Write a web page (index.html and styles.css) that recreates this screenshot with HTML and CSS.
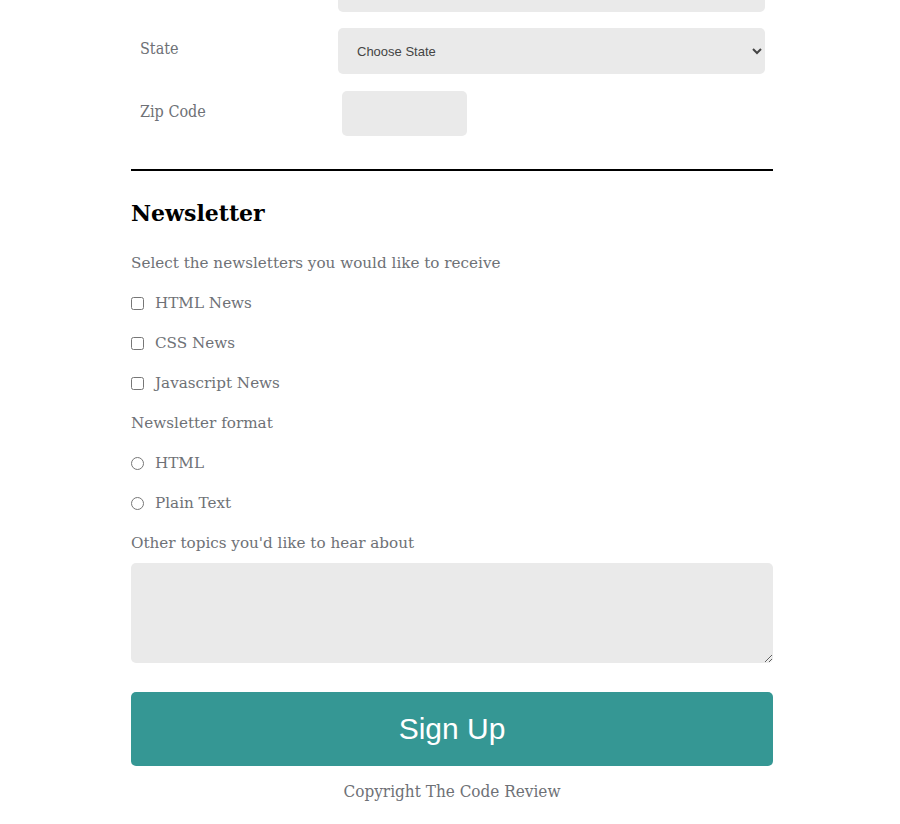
FILE: index.html
```html
<!DOCTYPE html>
<html>
<head>
<meta charset="utf-8">
<link rel="stylesheet" href="styles.css">
</head>
<body>
<form class="page">
  <div class="row row-cut">
    <span class="lbl"></span>
    <input class="field cut" type="text">
  </div>
  <div class="row row-state">
    <label class="lbl">State</label>
    <select class="field select">
      <option>Choose State</option>
    </select>
  </div>
  <div class="row row-zip">
    <label class="lbl">Zip Code</label>
    <input class="field zip" type="text">
  </div>
  <hr class="rule">
  <h2 class="title">Newsletter</h2>
  <p class="line">Select the newsletters you would like to receive</p>
  <label class="line opt"><input type="checkbox" class="box"><span>HTML News</span></label>
  <label class="line opt"><input type="checkbox" class="box"><span>CSS News</span></label>
  <label class="line opt"><input type="checkbox" class="box"><span>Javascript News</span></label>
  <p class="line">Newsletter format</p>
  <label class="line opt"><input type="radio" name="fmt" class="box"><span>HTML</span></label>
  <label class="line opt"><input type="radio" name="fmt" class="box"><span>Plain Text</span></label>
  <p class="line">Other topics you'd like to hear about</p>
  <textarea class="topics"></textarea>
  <button type="button" class="submit">Sign Up</button>
  <p class="copy">Copyright The Code Review</p>
</form>
</body>
</html>
```
FILE: styles.css
```css
html, body {
  margin: 0;
  padding: 0;
  background: #fff;
}
body {
  font-family: "DejaVu Serif", "Liberation Serif", serif;
  color: #6e7176;
  font-size: 15.2px;
}
.page {
  width: 642px;
  margin: 0 0 0 131px;
  display: flex;
  flex-direction: column;
}
.row {
  display: flex;
  align-items: center;
}
.lbl {
  width: 198px;
  padding-left: 9px;
  font-family: "DejaVu Serif Condensed", "DejaVu Serif", serif;
  font-size: 16px;
  flex: none;
}
.field {
  background: #eaeaea;
  border: none;
  border-radius: 5px;
  outline: none;
  box-sizing: border-box;
}
.row-cut {
  height: 12px;
  overflow: hidden;
  align-items: flex-end;
}
.cut {
  width: 427px;
  height: 40px;
  flex: none;
}
.row-state {
  margin-top: 16px;
  height: 46px;
}
.row-state .lbl {
  margin-top: -6px;
}
.select {
  width: 427px;
  height: 46px;
  font-family: "Liberation Sans", Arial, sans-serif;
  font-size: 13px;
  color: #444;
  padding: 0 15px;
}
.row-zip {
  margin-top: 17px;
  height: 45px;
}
.row-zip .lbl {
  margin-top: -5px;
}
.zip {
  width: 125px;
  height: 45px;
  margin-left: 4px;
}
.rule {
  margin: 33px 0 0 0;
  border: none;
  border-top: 2px solid #000;
  height: 0;
}
.title {
  margin: 26px 0 0 0;
  font-size: 22px;
  line-height: 32px;
  font-weight: bold;
  color: #000;
}
.line {
  margin: 0;
  height: 40px;
  line-height: 40px;
  display: flex;
  align-items: center;
}
.title + .line {
  margin-top: 14px;
}
.opt .box {
  margin: 0 11px 0 0;
  width: 13px;
  height: 13px;
}
.topics {
  margin-top: 0;
  height: 100px;
  width: 642px;
  box-sizing: border-box;
  background: #eaeaea;
  border: none;
  border-radius: 5px;
  resize: vertical;
}
.submit {
  margin-top: 29px;
  height: 74px;
  background: #359794;
  color: #fff;
  border: none;
  border-radius: 5px;
  font-family: "Liberation Sans", Arial, sans-serif;
  font-size: 30px;
}
.copy {
  margin: 15px 0 0 0;
  text-align: center;
  font-family: "DejaVu Serif Condensed", "DejaVu Serif", serif;
  font-size: 17px;
}
```
